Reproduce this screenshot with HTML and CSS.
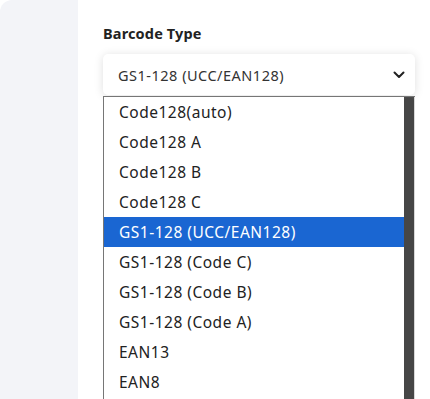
FILE: index.html
```html
<!DOCTYPE html>
<html>

<head>
    <title>Barcode Type</title>
    <link rel="stylesheet" href="styles.css">
</head>

<body>
    <div class="page">
        <aside class="side"></aside>
        <main class="content">
            <div class="field">
                <label class="field-label">Barcode Type</label>
                <div class="select">
                    <span class="select-value">GS1-128 (UCC/EAN128)</span>
                    <svg class="chevron" width="12" height="8" viewBox="0 0 12 8">
                        <path d="M1.5 1.5 L6 6 L10.5 1.5" fill="none" stroke="#222" stroke-width="2"
                            stroke-linecap="round" stroke-linejoin="round" />
                    </svg>
                </div>
                <div class="options">
                    <ul class="option-list">
                        <li>Code128(auto)</li>
                        <li>Code128 A</li>
                        <li>Code128 B</li>
                        <li>Code128 C</li>
                        <li class="selected">GS1-128 (UCC/EAN128)</li>
                        <li>GS1-128 (Code C)</li>
                        <li>GS1-128 (Code B)</li>
                        <li>GS1-128 (Code A)</li>
                        <li>EAN13</li>
                        <li>EAN8</li>
                    </ul>
                    <div class="scrollbar"><div class="thumb"></div></div>
                </div>
            </div>
        </main>
    </div>
</body>

</html>
```

FILE: styles.css
```css
html,
body {
    margin: 0;
    height: 100%;
    overflow: hidden;
}

body {
    background: #fff;
    font-family: "Noto Sans", "Open Sans", sans-serif;
    color: #222;
}

.page {
    display: flex;
    height: 399px;
}

.side {
    width: 78px;
    flex-shrink: 0;
    background-color: #f3f4f8;
    border-top-left-radius: 12px;
}

.content {
    flex: 1;
    padding: 23px 15px 0 25px;
}

.field-label {
    display: block;
    font-size: 14.5px;
    font-weight: 700;
    letter-spacing: 0.15px;
    color: #222;
    line-height: 20px;
}

.select {
    margin-top: 11px;
    height: 41px;
    display: flex;
    align-items: center;
    justify-content: space-between;
    padding: 0 10px 0 15px;
    background: #fff;
    border-radius: 5px;
    box-shadow: 0 1px 10px rgba(0, 0, 0, 0.13);
    font-size: 14.5px;
    letter-spacing: 0.5px;
    color: #333;
}

.chevron {
    margin-top: 1px;
}

.options {
    margin-top: 1px;
    display: flex;
    border: 1px solid #767676;
    border-right: none;
    border-bottom: none;
    height: 320px;
    background: #fff;
}

.option-list {
    flex: 1;
    list-style: none;
    margin: 0;
    padding: 0;
}

.option-list li {
    height: 30px;
    line-height: 31px;
    padding-left: 15px;
    font-size: 15.5px;
    letter-spacing: 0.5px;
    color: #222;
}

.option-list li.selected {
    background-color: #1a66d2;
    color: #fff;
}

.scrollbar {
    width: 10px;
    background: #4a4a4a;
    border-right: 1px solid #d8d8d8;
    padding-top: 1px;
}

.thumb {
    height: 100%;
    background: #464646;
    border-radius: 4px 4px 0 0;
}
```
